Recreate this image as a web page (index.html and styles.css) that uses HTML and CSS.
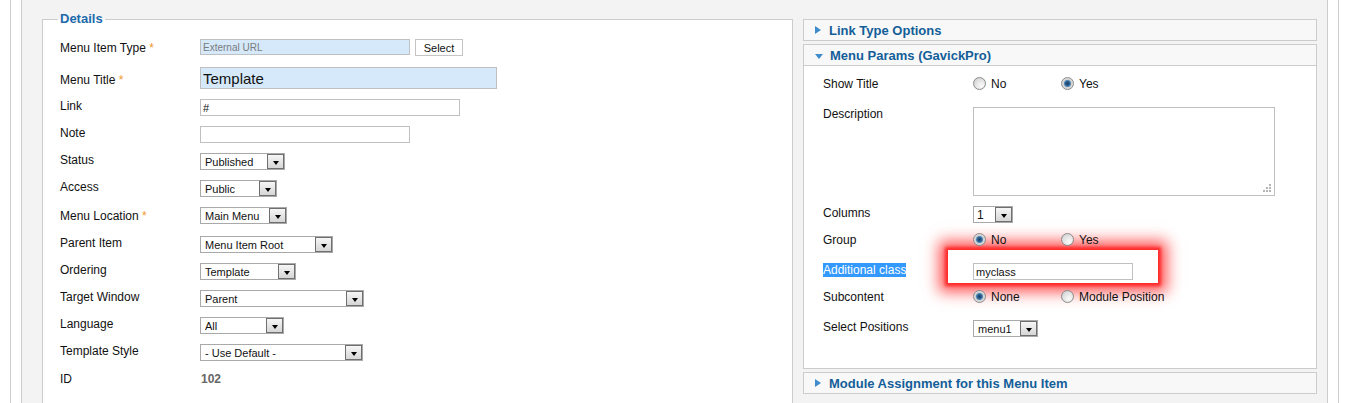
FILE: index.html
```html
<!DOCTYPE html>
<html>
<head>
<meta charset="utf-8">
<title>Menu Item</title>
<link rel="stylesheet" href="styles.css">
</head>
<body>
<div class="outer">
  <div class="inner">
    <div class="col-left">
      <fieldset class="details">
        <legend>Details</legend>
        <div class="row h29">
          <label class="lbl pt3">Menu Item Type <span class="star">*</span></label>
          <div class="field">
            <input class="inp blue type-inp" type="text" value="External URL" readonly>
            <span class="btn">Select</span>
          </div>
        </div>
        <div class="row h32">
          <label class="lbl pt6">Menu Title <span class="star">*</span></label>
          <input class="inp blue title-inp" type="text" value="Template">
        </div>
        <div class="row">
          <label class="lbl">Link</label>
          <input class="inp w260" type="text" value="#">
        </div>
        <div class="row">
          <label class="lbl">Note</label>
          <input class="inp w210" type="text" value="">
        </div>
        <div class="row">
          <label class="lbl">Status</label>
          <span class="sel w85"><span class="sel-t">Published</span><span class="sel-b"></span></span>
        </div>
        <div class="row">
          <label class="lbl">Access</label>
          <span class="sel w77"><span class="sel-t">Public</span><span class="sel-b"></span></span>
        </div>
        <div class="row h29">
          <label class="lbl pt2">Menu Location <span class="star">*</span></label>
          <span class="sel w87"><span class="sel-t">Main Menu</span><span class="sel-b"></span></span>
        </div>
        <div class="row">
          <label class="lbl">Parent Item</label>
          <span class="sel w133"><span class="sel-t">Menu Item Root</span><span class="sel-b"></span></span>
        </div>
        <div class="row">
          <label class="lbl">Ordering</label>
          <span class="sel w96"><span class="sel-t">Template</span><span class="sel-b"></span></span>
        </div>
        <div class="row">
          <label class="lbl">Target Window</label>
          <span class="sel w164"><span class="sel-t">Parent</span><span class="sel-b"></span></span>
        </div>
        <div class="row">
          <label class="lbl">Language</label>
          <span class="sel w84"><span class="sel-t">All</span><span class="sel-b"></span></span>
        </div>
        <div class="row h28">
          <label class="lbl">Template Style</label>
          <span class="sel w163"><span class="sel-t">- Use Default -</span><span class="sel-b"></span></span>
        </div>
        <div class="row">
          <label class="lbl">ID</label>
          <span class="idv">102</span>
        </div>
      </fieldset>
    </div>

    <div class="col-right">
      <div class="panel">
        <div class="panel-h"><span class="tri-r"></span>Link Type Options</div>
      </div>
      <div class="panel">
        <div class="panel-h open"><span class="tri-d"></span>Menu Params (GavickPro)</div>
        <div class="pcontent">
          <div class="glow"></div>
          <div class="prow h30">
            <label class="plbl">Show Title</label>
            <div class="radios">
              <span class="ropt"><span class="radio"></span>No</span>
              <span class="ropt"><span class="radio on"></span>Yes</span>
            </div>
          </div>
          <div class="prow h99">
            <label class="plbl">Description</label>
            <div class="ta">
              <svg class="grip" width="9" height="9" viewBox="0 0 9 9">
                <rect x="7" y="1" width="2" height="2" fill="#b5b5b5"/>
                <rect x="4" y="4" width="2" height="2" fill="#b5b5b5"/>
                <rect x="7" y="4" width="2" height="2" fill="#b5b5b5"/>
                <rect x="1" y="7" width="2" height="2" fill="#b5b5b5"/>
                <rect x="4" y="7" width="2" height="2" fill="#b5b5b5"/>
                <rect x="7" y="7" width="2" height="2" fill="#b5b5b5"/>
              </svg>
            </div>
          </div>
          <div class="prow">
            <label class="plbl">Columns</label>
            <span class="sel w40 big"><span class="sel-t">1</span><span class="sel-b"></span></span>
          </div>
          <div class="prow h30">
            <label class="plbl">Group</label>
            <div class="radios">
              <span class="ropt"><span class="radio on"></span>No</span>
              <span class="ropt"><span class="radio"></span>Yes</span>
            </div>
          </div>
          <div class="prow">
            <label class="plbl"><span class="hl">Additional class</span></label>
            <input class="inp w160" type="text" value="myclass">
          </div>
          <div class="prow h30">
            <label class="plbl">Subcontent</label>
            <div class="radios">
              <span class="ropt"><span class="radio on"></span>None</span>
              <span class="ropt"><span class="radio"></span>Module Position</span>
            </div>
          </div>
          <div class="prow h17">
            <label class="plbl">Select Positions</label>
            <span class="sel w65"><span class="sel-t">menu1</span><span class="sel-b"></span></span>
          </div>
        </div>
      </div>
      <div class="panel">
        <div class="panel-h"><span class="tri-r"></span>Module Assignment for this Menu Item</div>
      </div>
    </div>
  </div>
</div>
</body>
</html>
```
FILE: styles.css
```css
html, body {
  margin: 0;
  padding: 0;
  overflow: hidden;
}
body {
  background: #fff;
  font-family: "Liberation Sans", Arial, sans-serif;
  font-size: 12px;
  color: #111;
}
.outer {
  margin: 0 10px;
  border: 1px solid #ccc;
  border-top: 0;
  padding: 0 10px;
  background: #fff;
}
.inner {
  border: 1px solid #ccc;
  border-top: 0;
  background: #f3f3f3;
  padding: 0 10px 0 20px;
  display: flex;
  gap: 10px;
  align-items: flex-start;
  min-height: 440px;
}
.col-left {
  width: 751px;
  flex: none;
  margin-top: 11px;
}
.col-right {
  width: 514px;
  flex: none;
  margin-top: 19px;
}

/* fieldset */
fieldset.details {
  margin: 0;
  border: 1px solid #ccc;
  background: #fff;
  padding: 11px 0 60px 15px;
}
fieldset.details legend {
  font-weight: bold;
  font-size: 13px;
  line-height: 16px;
  color: #1d6aab;
  padding: 0 2px;
}
.row {
  display: flex;
  align-items: flex-start;
  height: 27px;
  padding-left: 2px;
}
.row.h28 { height: 28px; }
.row.h29 { height: 29px; }
.row.h32 { height: 32px; }
.lbl {
  width: 140px;
  flex: none;
  line-height: 14px;
}
.pt2 { padding-top: 2px; }
.pt3 { padding-top: 3px; }
.pt6 { padding-top: 6px; }
.star {
  color: #f0992a;
}
.field {
  display: flex;
  align-items: flex-start;
}

/* inputs */
.inp {
  box-sizing: border-box;
  height: 17px;
  margin: 0;
  border: 1px solid #c0c0c0;
  background: #fff;
  padding: 0 2px;
  font: 11px "Liberation Sans", Arial, sans-serif;
  color: #111;
  outline: none;
}
.inp.blue { background: #d5e9fb; }
.type-inp {
  width: 210px;
  height: 16px;
  font-size: 10px;
  color: #7a7a7a;
  margin-top: 1px;
}
.title-inp {
  width: 297px;
  height: 22px;
  font-size: 15px;
  color: #111;
}
.w160 { width: 160px; }
.w210 { width: 210px; }
.w260 { width: 260px; }
.btn {
  box-sizing: border-box;
  margin-left: 5px;
  width: 48px;
  height: 17px;
  margin-top: 1px;
  border: 1px solid #c4c4c4;
  background: #fff;
  font-size: 11px;
  color: #111;
  display: inline-flex;
  align-items: center;
  justify-content: center;
}

/* selects */
.sel {
  box-sizing: border-box;
  display: inline-flex;
  align-items: center;
  height: 17px;
  border: 1px solid #a9a9a9;
  background: #fff;
  font-size: 11px;
  color: #111;
  padding-left: 4px;
}
.sel.big { font-size: 12px; padding-left: 3px; }
.sel-t {
  flex: 1;
  white-space: nowrap;
  overflow: hidden;
}
.sel-b {
  box-sizing: border-box;
  width: 17px;
  height: 15px;
  flex: none;
  border: 1px solid #6f6f6f;
  background: linear-gradient(#f6f6f6, #d6d6d6);
  display: flex;
  align-items: center;
  justify-content: center;
  padding-top: 3px;
}
.sel-b::after {
  content: "";
  border-left: 3.5px solid transparent;
  border-right: 3.5px solid transparent;
  border-top: 4px solid #000;
}
.w40 { width: 40px; }
.w65 { width: 65px; }
.w77 { width: 77px; }
.w84 { width: 84px; }
.w85 { width: 85px; }
.w87 { width: 87px; }
.w96 { width: 96px; }
.w133 { width: 133px; }
.w163 { width: 163px; }
.w164 { width: 164px; }

.idv {
  font-weight: bold;
  color: #666;
  line-height: 14px;
  padding-left: 1px;
}

/* right panels */
.panel {
  border: 1px solid #ccc;
  background: #fff;
  margin-bottom: 3px;
}
.panel-h {
  height: 20px;
  background: #f8f8f8;
  display: flex;
  align-items: center;
  padding-left: 11px;
  gap: 8px;
  font-weight: bold;
  font-size: 13px;
  color: #135e98;
}
.panel-h.open {
  border-bottom: 1px solid #ccc;
  gap: 7px;
}
.tri-r {
  width: 0;
  height: 0;
  border-left: 6px solid #3e8ccc;
  border-top: 4px solid transparent;
  border-bottom: 4px solid transparent;
}
.tri-d {
  width: 0;
  height: 0;
  margin-top: 2px;
  border-top: 5px solid #3e8ccc;
  border-left: 4px solid transparent;
  border-right: 4px solid transparent;
}
.pcontent {
  position: relative;
  z-index: 0;
  padding: 11px 0 31px 19px;
}
.prow {
  display: flex;
  align-items: flex-start;
  height: 27px;
}
.prow.h17 { height: 17px; }
.prow.h30 { height: 30px; }
.prow.h99 { height: 99px; }
.plbl {
  width: 150px;
  flex: none;
  line-height: 14px;
}
.hl {
  background: #3399ff;
  color: #fff;
}
.radios {
  display: flex;
}
.ropt {
  width: 88px;
  height: 13px;
  display: flex;
  align-items: center;
  gap: 5px;
  line-height: 14px;
  white-space: nowrap;
}
.radio {
  box-sizing: border-box;
  width: 13px;
  height: 13px;
  flex: none;
  border-radius: 50%;
  border: 1px solid #8a8b8b;
  background: radial-gradient(circle at 65% 70%, #fbfbfb 0, #e6e6e6 45%, #c9c9c9 100%);
}
.radio.on {
  background: radial-gradient(circle at 50% 50%, #173f66 0, #2a5f8f 2px, #5e8db8 3.2px, #d2d2d2 4px, #ececec 100%);
}
.ta {
  box-sizing: border-box;
  width: 302px;
  height: 89px;
  border: 1px solid #c0c0c0;
  background: #fff;
  display: flex;
  align-items: flex-end;
  justify-content: flex-end;
  padding: 0 3px 3px 0;
}
.glow {
  position: absolute;
  z-index: -1;
  left: 144px;
  top: 184px;
  width: 210px;
  height: 33px;
  background: #fff;
  box-shadow: 0 0 3px 3px rgba(255, 40, 40, 0.95), 0 0 14px 9px rgba(255, 30, 30, 0.75);
}
```
